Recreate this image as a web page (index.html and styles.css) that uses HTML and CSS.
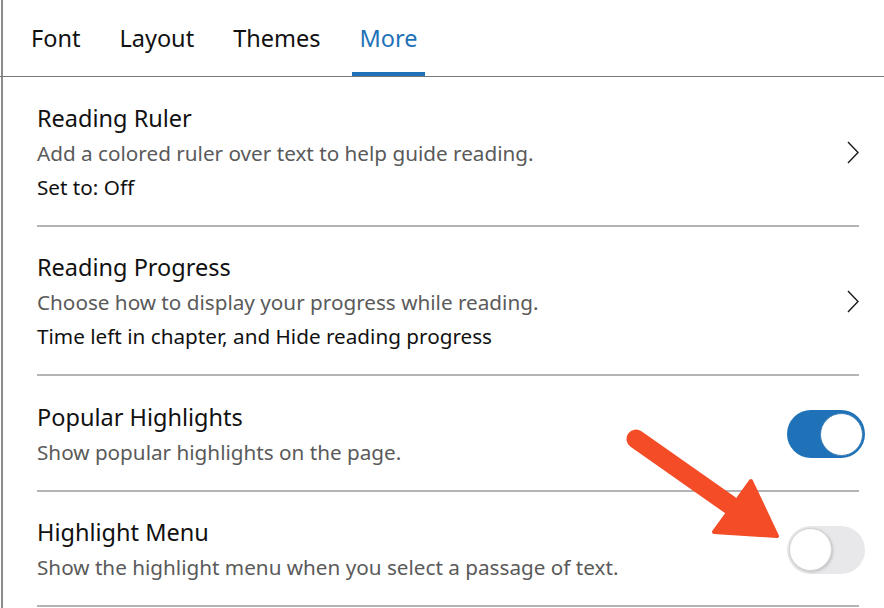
FILE: index.html
```html
<!DOCTYPE html>
<html lang="en">
<head>
<meta charset="utf-8">
<title>More settings</title>
<link rel="stylesheet" href="styles.css">
</head>
<body>
<div class="panel">
  <nav class="tabs">
    <span class="tab">Font</span>
    <span class="tab">Layout</span>
    <span class="tab">Themes</span>
    <span class="tab active">More</span>
  </nav>
  <div class="list">
    <div class="row">
      <div class="text">
        <div class="title">Reading Ruler</div>
        <div class="desc">Add a colored ruler over text to help guide reading.</div>
        <div class="value">Set to: Off</div>
      </div>
      <svg class="chev" width="12" height="23" viewBox="0 0 12 23"><path d="M1 1 L11 11.5 L1 22" fill="none" stroke="#1a1a1a" stroke-width="1.4"/></svg>
    </div>
    <div class="row">
      <div class="text">
        <div class="title">Reading Progress</div>
        <div class="desc">Choose how to display your progress while reading.</div>
        <div class="value">Time left in chapter, and Hide reading progress</div>
      </div>
      <svg class="chev" width="12" height="23" viewBox="0 0 12 23"><path d="M1 1 L11 11.5 L1 22" fill="none" stroke="#1a1a1a" stroke-width="1.4"/></svg>
    </div>
    <div class="row">
      <div class="text">
        <div class="title">Popular Highlights</div>
        <div class="desc">Show popular highlights on the page.</div>
      </div>
      <span class="toggle on"><span class="knob"></span></span>
    </div>
    <div class="row">
      <div class="text">
        <div class="title">Highlight Menu</div>
        <div class="desc">Show the highlight menu when you select a passage of text.</div>
      </div>
      <span class="toggle off"><span class="knob"></span></span>
    </div>
  </div>
  <svg class="arrow" width="884" height="608" viewBox="0 0 884 608">
    <line x1="636" y1="439" x2="730" y2="505" stroke="#f34c27" stroke-width="19" stroke-linecap="round"/>
    <polygon points="751,481 777,536 714,532" fill="#f34c27" stroke="#f34c27" stroke-width="4" stroke-linejoin="round"/>
  </svg>
</div>
</body>
</html>
```
FILE: styles.css
```css
html, body {
  margin: 0;
  padding: 0;
  background: #ffffff;
}
body {
  font-family: "Noto Sans", "Open Sans", sans-serif;
  color: #111111;
  width: 884px;
  height: 608px;
  overflow: hidden;
}
.panel {
  position: relative;
  height: 608px;
  margin-left: 1px;
  border-left: 2px solid #8c8c8c;
}
.tabs {
  display: flex;
  align-items: flex-end;
  gap: 25px;
  height: 76px;
  padding-left: 21px;
  border-bottom: 1px solid #777777;
  margin-left: -3px;
  padding-left: 24px;
}
.tab {
  font-size: 23.5px;
  line-height: 34px;
  padding: 0 7px 17px;
  border-bottom: 4px solid transparent;
  color: #111111;
}
.tab.active {
  color: #1f72b8;
  border-bottom-color: #1f72b8;
}
.list {
  margin-left: 34px;
  margin-right: 25px;
}
.row {
  display: flex;
  align-items: center;
  justify-content: space-between;
  padding: 23.5px 0 21px;
  border-bottom: 2px solid #b4b4b4;
}
.title {
  font-size: 23.5px;
  line-height: 35px;
  color: #111111;
}
.desc {
  font-size: 20.7px;
  line-height: 34px;
  color: #5a5a5a;
}
.value {
  font-size: 20.7px;
  line-height: 34px;
  color: #111111;
}
.chev {
  display: block;
  flex: none;
}
.toggle {
  position: relative;
  flex: none;
  width: 78px;
  height: 48px;
  border-radius: 24px;
  margin-right: -6px;
  box-sizing: border-box;
}
.toggle.on {
  background: #1f72b8;
}
.toggle.off {
  background: #e8e8ea;
}
.knob {
  position: absolute;
  top: 2.5px;
  width: 43px;
  height: 43px;
  border-radius: 50%;
  background: #ffffff;
  box-sizing: border-box;
}
.toggle.on .knob {
  right: 2.5px;
  border: 1px solid #3f7fb5;
}
.toggle.off .knob {
  left: 2px;
  border: 1px solid #d2d2d2;
  box-shadow: 1px 1px 3px rgba(0,0,0,0.18);
}
.arrow {
  position: absolute;
  left: -3px;
  top: 0;
  pointer-events: none;
}
```
